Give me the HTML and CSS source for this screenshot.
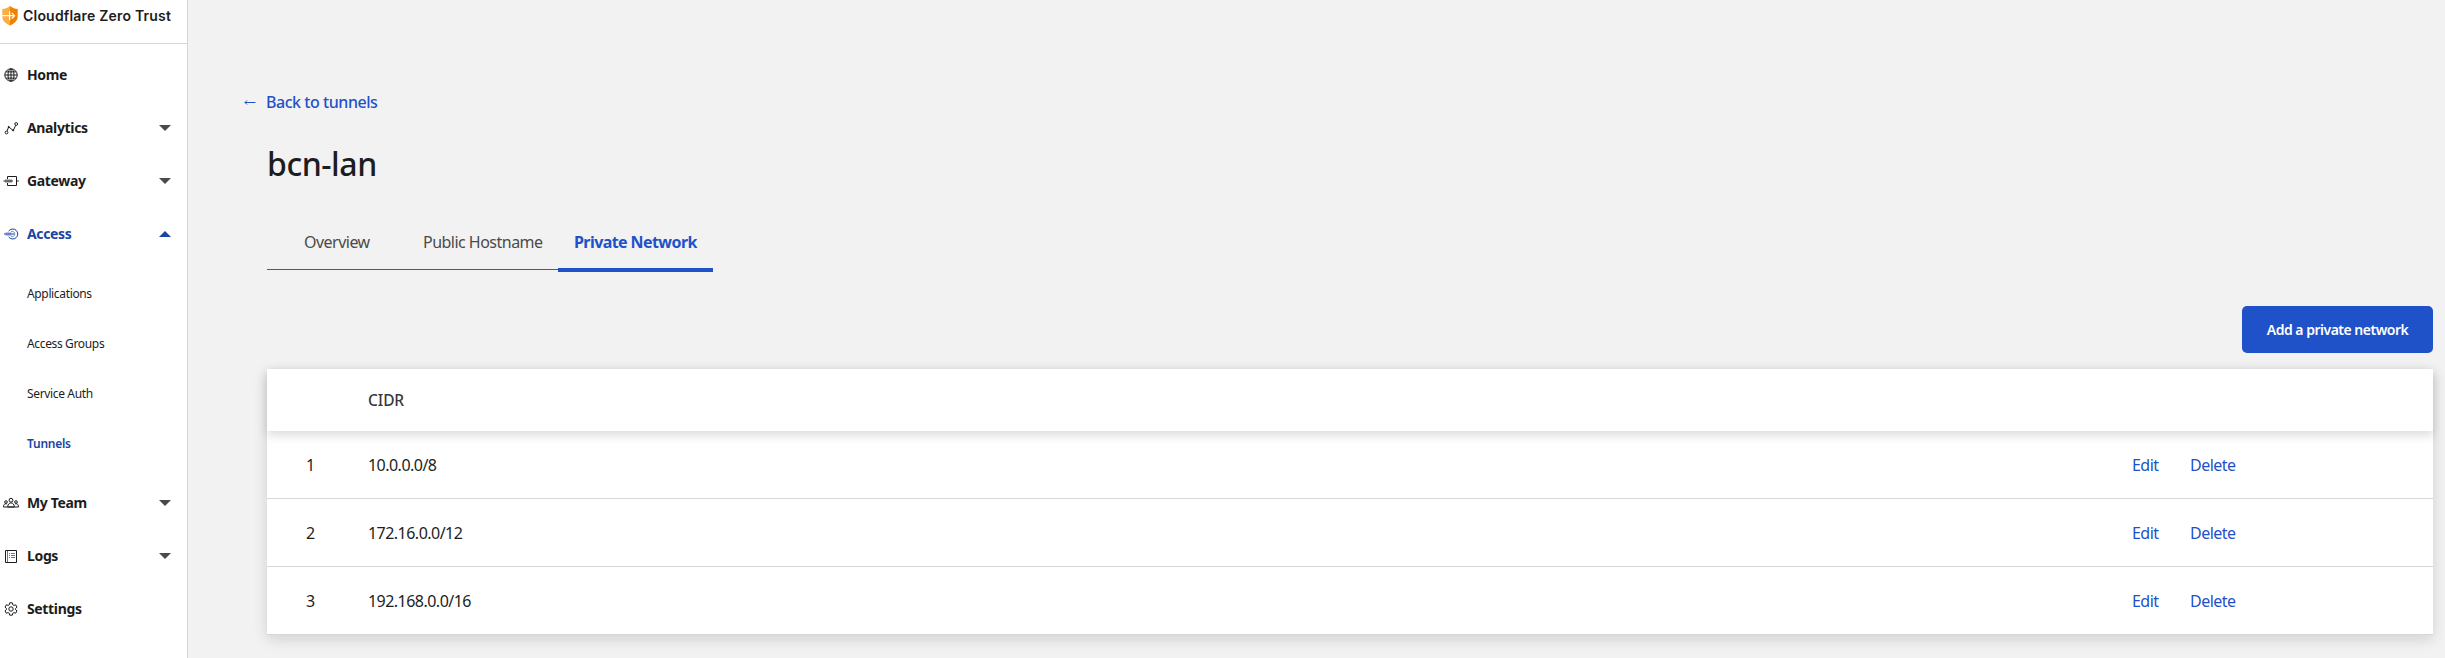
FILE: index.html
```html
<!DOCTYPE html>
<html lang="en">
<head>
<meta charset="utf-8">
<title>Cloudflare Zero Trust</title>
<link rel="stylesheet" href="styles.css">
</head>
<body>
<div class="app">
  <aside class="sidebar">
    <header class="brand">
      <svg class="brand-logo" width="16" height="20" viewBox="0 0 16 20"><path fill="#fbad41" d="M8 0C5.500 2 3 2.800.3 2.900V10c0 4.600 3 7.400 7.700 9.500z"/><path fill="#f08200" d="M8 0c2.500 2 5 2.800 7.700 2.900V10c0 4.600-3 7.400-7.700 9.500z"/><path d="M0 9.700h12.500M9.700 6.900l2.900 2.800-2.900 2.800M7.700 5.200v9" fill="none" stroke="#fff" stroke-width="1.200"/></svg>
      <span class="brand-name">Cloudflare Zero Trust</span>
    </header>
    <nav class="nav">
      <a class="nav-item"><svg class="icon" viewBox="0 0 16 16"><circle cx="8" cy="8" r="6.200"/><ellipse cx="8" cy="8" rx="3" ry="6.200"/><path d="M8 1.800v12.400M1.800 8h12.400M2.800 4.900h10.400M2.800 11.100h10.400"/></svg><span>Home</span></a>
      <a class="nav-item"><svg class="icon" viewBox="0 0 16 16"><circle cx="3.500" cy="12.500" r="1.400"/><circle cx="13.200" cy="4" r="1.400"/><path d="M4 11.100 5.700 6.800l4.500 3.800 2.500-5.300"/><circle cx="5.700" cy="7" r=".6"/><circle cx="10.100" cy="10.300" r=".6"/></svg><span>Analytics</span><i class="caret"></i></a>
      <a class="nav-item"><svg class="icon" viewBox="0 0 16 16"><path d="M4.500 6V3.500h9v9h-9V10M.5 8h9.500M13.500 8h2.200"/><path class="soft" d="M2 7h7M2 9h7"/></svg><span>Gateway</span><i class="caret"></i></a>
      <a class="nav-item nav-item--active"><svg class="icon" viewBox="0 0 16 16"><path d="M5.600 5.200a5 5 0 1 1 0 5.600M1 8h10"/><path class="soft" d="M2.500 7h6M2.500 9h6M8 5.500a2.700 2.700 0 1 1 0 5"/></svg><span>Access</span><i class="caret caret--up"></i></a>
      <div class="subnav">
        <a class="sub-item">Applications</a>
        <a class="sub-item">Access Groups</a>
        <a class="sub-item">Service Auth</a>
        <a class="sub-item sub-item--active">Tunnels</a>
      </div>
      <a class="nav-item"><svg class="icon" viewBox="0 0 16 16"><circle cx="8" cy="5.200" r="1.900"/><circle cx="3" cy="7" r="1.300"/><circle cx="13" cy="7" r="1.300"/><path d="M4.700 12c0-5.500 6.600-5.500 6.600 0zM.5 12c0-3.200 1.700-3.500 3.600-3.100M15.500 12c0-3.200-1.700-3.500-3.600-3.100M.5 12h15"/></svg><span>My Team</span><i class="caret"></i></a>
      <a class="nav-item"><svg class="icon" viewBox="0 0 16 16"><path d="M2.500 2.500h11v12h-11z"/><path class="soft" d="M4.500 2.500v12M6 5.500h1M8 5.500h4M6 7.500h1M8 7.500h4M6 9.500h1M8 9.500h4"/></svg><span>Logs</span><i class="caret"></i></a>
      <a class="nav-item"><svg class="icon" viewBox="0 0 16 16"><circle cx="8" cy="8" r="2.200"/><path d="M6.700 1.800h2.600l.4 1.900 1.200.7 1.800-.6L14 6.100l-1.400 1.300v1.300L14 9.900l-1.300 2.300-1.800-.6-1.200.7-.4 1.900H6.700l-.4-1.900-1.200-.7-1.800.6L2 9.900l1.400-1.200V7.400L2 6.100l1.300-2.300 1.800.6 1.200-.7z"/></svg><span>Settings</span></a>
    </nav>
  </aside>
  <main class="main">
    <a class="back"><svg class="back-arrow" width="12" height="8" viewBox="0 0 12 8"><path d="M1 4.500h10.500M3 2.500 1 4.500l2 2"/></svg><span>Back to tunnels</span></a>
    <h1 class="title">bcn-lan</h1>
    <div class="tabs">
      <a class="tab tab--overview">Overview</a>
      <a class="tab tab--public">Public Hostname</a>
      <a class="tab tab--active">Private Network</a>
    </div>
    <div class="actions"><button class="button">Add a private network</button></div>
    <section class="table">
      <div class="table-head"><span>CIDR</span></div>
      <div class="row"><span>1</span><span>10.0.0.0/8</span><a class="link">Edit</a><a class="link">Delete</a></div>
      <div class="row"><span>2</span><span>172.16.0.0/12</span><a class="link">Edit</a><a class="link">Delete</a></div>
      <div class="row"><span>3</span><span>192.168.0.0/16</span><a class="link">Edit</a><a class="link">Delete</a></div>
    </section>
  </main>
</div>
</body>
</html>
```
FILE: styles.css
```css
* { box-sizing: border-box; }
body { margin: 0; font-family: "Noto Sans", "Open Sans", sans-serif; color: #1d1d1d; }
.app { display: flex; height: 658px; overflow: hidden; background: #f2f2f2; }

.sidebar { width: 188px; flex: none; background: #fff; border-right: 1px solid #d5d5d5; }
.brand { display: flex; align-items: center; height: 44px; padding: 0 0 11px 2px; border-bottom: 1px solid #d5d7d8; }
.brand-logo { flex: none; margin-right: 5px; }
.brand-name { font: 600 14px/20px Inter, sans-serif; letter-spacing: .2px; white-space: nowrap; }
.nav { padding-top: 4px; }
.nav-item { display: flex; align-items: center; height: 53px; padding: 0 16px 0 3px; font-size: 14px; font-weight: 700; letter-spacing: -.35px; white-space: nowrap; }
.nav-item--active { color: #1a45a5; }
.icon { width: 16px; height: 16px; margin-right: 8px; flex: none; fill: none; stroke: currentColor; stroke-width: 1; }
.soft { opacity: .6; }
.caret { margin-left: auto; border: 6px solid transparent; border-top-color: #4a4a4a; border-bottom: 0; }
.caret--up { border-bottom: 6px solid #1a45a5; border-top: 0; }
.subnav { padding: 8px 0 8px 27px; }
.sub-item { display: flex; align-items: center; height: 50px; font-size: 12px; letter-spacing: -.35px; white-space: nowrap; }
.sub-item--active { font-weight: 600; letter-spacing: -.25px; color: #1a45a5; }

.main { flex: 1; min-width: 0; padding: 90px 12px 0 79px; }
.back { display: flex; align-items: center; height: 24px; margin-left: -23px; font-size: 16px; font-weight: 500; letter-spacing: -.45px; color: #1f51c9; }
.back-arrow { margin-right: 10px; fill: none; stroke: currentColor; stroke-width: 1; }
.title { margin: 26px 0 0; font-size: 32px; line-height: 48px; font-weight: 500; letter-spacing: -.45px; }
.tabs { display: flex; width: 446px; height: 52px; margin-top: 32px; font-size: 16px; line-height: 44px; letter-spacing: -.52px; color: #4a4a4a; white-space: nowrap; }
.tab { height: 50px; border-bottom: 1px solid #595959; }
.tab--overview { width: 140px; padding-left: 37px; }
.tab--public { width: 151px; padding-left: 16px; }
.tab--active { width: 155px; height: 52px; padding-left: 16px; border-bottom: 4px solid #1f51c9; color: #1f51c9; font-weight: 700; letter-spacing: -.58px; }
.actions { display: flex; justify-content: flex-end; margin-top: 34px; }
.button { width: 191px; height: 47px; padding: 0; border: 0; border-radius: 5px; background: #1f51c9; color: #fff; font: 600 14px "Noto Sans", sans-serif; letter-spacing: -.5px; white-space: nowrap; }
.table { margin-top: 16px; background: #fff; box-shadow: 0 4px 14px rgba(0, 0, 0, .14); }
.table-head { display: flex; align-items: center; height: 62px; padding-left: 101px; font-size: 15.5px; font-weight: 500; letter-spacing: -.1px; color: #36393a; box-shadow: 0 4px 10px rgba(0, 0, 0, .15); }
.row { display: grid; grid-template-columns: 62px 1764px 58px 1fr; align-items: center; height: 68px; padding-left: 39px; border-bottom: 1px solid #d5d7d8; font-size: 16px; letter-spacing: -.53px; }
.link { color: #1f51c9; }
```
